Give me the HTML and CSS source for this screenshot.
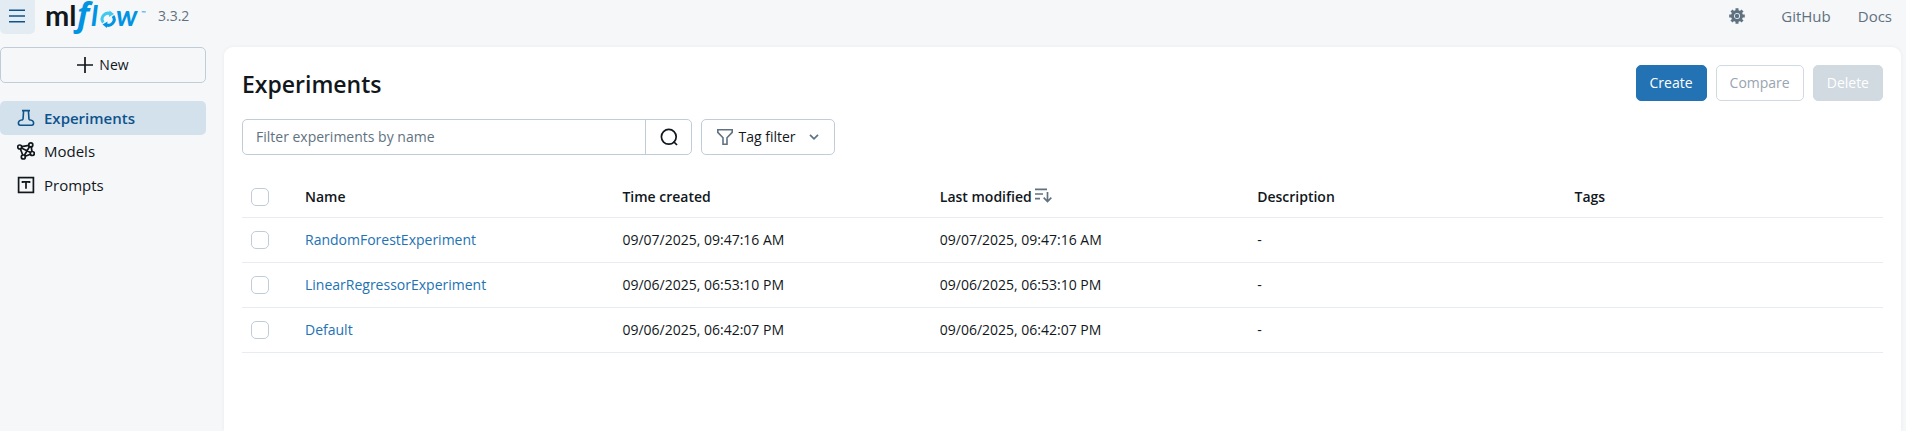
FILE: index.html
```html
<!DOCTYPE html>
<html lang="en">
<head>
<meta charset="utf-8">
<title>Experiments</title>
<link rel="stylesheet" href="styles.css">
</head>
<body>
<header class="topbar">
  <button class="menu-button" type="button" aria-label="Toggle sidebar">
    <svg width="16" height="16" viewBox="0 0 16 16" fill="none" stroke="currentColor" stroke-width="1.5"><path d="M0 2.2h16M0 8h16M0 13.8h16"/></svg>
  </button>
  <a class="logo" href="#" aria-label="mlflow home">
    <svg width="100" height="36" viewBox="0 0 100 36">
      <text class="logo-ml" x="-2" y="26">ml</text>
      <text class="logo-f" x="30" y="26">f</text>
      <text class="logo-flow" x="44" y="26">l</text>
      <g fill="none" stroke-width="3">
        <path stroke="#43c9ed" d="M56.300 22.500a5.800 5.800 0 0 1 7.500-8.500"/>
        <path stroke="#0194e2" d="M66 16a5.800 5.800 0 0 1-7.500 8.500"/>
      </g>
      <path fill="#43c9ed" d="M62.500 10.500l4.500 3.500-5 3z"/>
      <path fill="#0194e2" d="M60 28l-4.500-3.500 5-3z"/>
      <text class="logo-flow" x="69" y="26">w</text>
      <text class="logo-tm" x="94" y="15">™</text>
    </svg>
  </a>
  <span class="version">3.3.2</span>
  <nav class="top-links">
    <a class="gear" href="#" aria-label="Settings">
      <svg width="16" height="16" viewBox="0 0 16 16" fill="none" stroke="currentColor"><circle cx="8" cy="8" r="4.500" stroke-width="3"/><path stroke-width="3" d="M8 .2v3M8 12.800v3M.2 8h3M12.800 8h3M2.500 2.500l2 2M11.500 11.500l2 2M13.500 2.500l-2 2M4.500 11.500l-2 2"/><circle cx="8" cy="8" r="2.200" fill="currentColor" stroke="none"/></svg>
    </a>
    <a href="#">GitHub</a>
    <a href="#">Docs</a>
  </nav>
</header>
<div class="layout">
  <aside class="sidebar">
    <button class="button new-button" type="button">
      <svg width="16" height="16" viewBox="0 0 16 16" fill="none" stroke="currentColor" stroke-width="1.700"><path d="M8 0v16M0 8h16"/></svg>New
    </button>
    <nav class="side-nav">
      <a class="side-link active" href="#">
        <svg width="18" height="18" viewBox="0 0 18 18" fill="none" stroke="currentColor" stroke-width="1.600"><path d="M5 1.600h8M6.600 1.600l-.6 9.200M11.400 1.600l.6 9.200M6 10.800c-2.800.3-4.600 1.300-4.600 3.200 0 1.500.6 2.200 1.800 2.200h11.600c1.200 0 1.800-.7 1.800-2.200 0-1.900-1.800-2.900-4.600-3.200"/></svg>Experiments
      </a>
      <a class="side-link" href="#">
        <svg width="18" height="18" viewBox="0 0 18 18" fill="none" stroke="currentColor" stroke-width="1.700"><circle cx="2.700" cy="5" r="2"/><circle cx="13.800" cy="2.900" r="2"/><circle cx="15.300" cy="11.500" r="2"/><circle cx="6.300" cy="15" r="2"/><path d="M4.700 4.600l7.200-1.300M4.400 6.100l9.200 4.500M3.400 7l2.300 6M14.200 4.900l.8 4.600M12.600 4.500l-5.200 8.800M8.200 14.200l5.300-2"/></svg>Models
      </a>
      <a class="side-link" href="#">
        <svg width="18" height="18" viewBox="0 0 18 18" fill="none" stroke="currentColor" stroke-width="1.700"><rect x="1.600" y="1.600" width="14.800" height="14.800"/><path d="M5.500 7V5.800h7V7M9 5.800v7"/></svg>Prompts
      </a>
    </nav>
  </aside>
  <main class="panel">
    <div class="title-row">
      <h1>Experiments</h1>
      <div class="actions">
        <button class="button primary" type="button">Create</button>
        <button class="button" type="button" disabled>Compare</button>
        <button class="button solid" type="button" disabled>Delete</button>
      </div>
    </div>
    <form class="filters">
      <div class="search">
        <input type="text" placeholder="Filter experiments by name" aria-label="Filter experiments by name">
        <button type="button" aria-label="Search">
          <svg width="18" height="18" viewBox="0 0 18 18" fill="none" stroke="currentColor" stroke-width="1.700"><circle cx="8.800" cy="8.800" r="7.400"/><path d="M13.500 13.500l3.500 3.500"/></svg>
        </button>
      </div>
      <button class="button tag-filter" type="button">
        <svg width="16" height="16" viewBox="0 0 16 16" fill="none" stroke="#5f7281" stroke-width="1.600"><path d="M.8.8h14.400v2.600L10 8.800v6.400H6V8.800L.8 3.400z"/></svg>
        <span>Tag filter</span>
        <svg class="chevron" width="10" height="6" viewBox="0 0 10 6" fill="none" stroke="#5f7281" stroke-width="1.700"><path d="M1 .8l4 4 4-4"/></svg>
      </button>
    </form>
    <table class="table">
      <thead>
        <tr>
          <th class="check"><input type="checkbox" aria-label="Select all"></th>
          <th>Name</th>
          <th>Time created</th>
          <th>Last modified <svg class="sort" width="17" height="15" viewBox="0 0 17 15" fill="none" stroke="#5f7281" stroke-width="1.700"><path d="M0 1.300h12M0 6h8M0 10.700h5M12.500 4v9.500M8.700 9.700l3.800 3.800 3.800-3.800"/></svg></th>
          <th>Description</th>
          <th>Tags</th>
        </tr>
      </thead>
      <tbody>
        <tr>
          <td class="check"><input type="checkbox" aria-label="Select RandomForestExperiment"></td>
          <td><a href="#">RandomForestExperiment</a></td>
          <td>09/07/2025, 09:47:16 AM</td>
          <td>09/07/2025, 09:47:16 AM</td>
          <td>-</td>
          <td></td>
        </tr>
        <tr>
          <td class="check"><input type="checkbox" aria-label="Select LinearRegressorExperiment"></td>
          <td><a href="#">LinearRegressorExperiment</a></td>
          <td>09/06/2025, 06:53:10 PM</td>
          <td>09/06/2025, 06:53:10 PM</td>
          <td>-</td>
          <td></td>
        </tr>
        <tr>
          <td class="check"><input type="checkbox" aria-label="Select Default"></td>
          <td><a href="#">Default</a></td>
          <td>09/06/2025, 06:42:07 PM</td>
          <td>09/06/2025, 06:42:07 PM</td>
          <td>-</td>
          <td></td>
        </tr>
      </tbody>
    </table>
  </main>
</div>
</body>
</html>
```
FILE: styles.css
```css
* { box-sizing: border-box; }
body {
  margin: 0;
  min-height: 100vh;
  display: flex;
  flex-direction: column;
  background: #f6f7f9;
  color: #11171c;
  font: 14px/20px "Segoe UI", "Open Sans", sans-serif;
}
button, input { font: inherit; color: inherit; }
a { color: #2272b4; text-decoration: none; }
svg { flex: none; }

.topbar { display: flex; align-items: flex-start; height: 47px; }
.menu-button {
  display: flex;
  align-items: center;
  justify-content: center;
  width: 35px;
  height: 34px;
  padding: 0 1px 2px 0;
  border: 0;
  border-radius: 0 0 5px 5px;
  background: #e4ecf3;
  color: #0e538b;
}
.logo { margin-left: 12px; height: 36px; }
.logo svg { display: block; overflow: visible; }
.logo-ml { font: 700 29px Lato, sans-serif; fill: #11171c; }
.logo-f { font: italic 700 33px "Open Sans", sans-serif; fill: #0194e2; }
.logo-flow { font: italic 700 29px Lato, sans-serif; fill: #0194e2; }
.logo-tm { font: 6px Lato, sans-serif; fill: #0194e2; }
.version { margin-left: 11px; padding-top: 6px; color: #5f7281; }
.top-links { display: flex; margin-left: auto; padding: 6px 14px 0 0; gap: 27px; }
.top-links a { color: #5f7281; font-size: 15px; }
.gear { display: flex; align-items: center; margin-right: 9px; }

.layout { display: flex; flex: 1; gap: 18px; padding-right: 5px; }
.sidebar { width: 206px; flex: none; }
.button {
  display: inline-flex;
  align-items: center;
  justify-content: center;
  height: 36px;
  padding: 0 13px;
  border: 1px solid #c0cdd8;
  border-radius: 5px;
  background: transparent;
}
.new-button { width: 100%; gap: 6px; }
.side-nav { display: flex; flex-direction: column; margin-top: 18px; }
.side-link {
  display: flex;
  align-items: center;
  gap: 9px;
  height: 34px;
  padding: 0 0 2px 17px;
  border-radius: 5px;
  color: #11171c;
  font-size: 15px;
}
.side-link.active { padding-bottom: 0; background: #d3e1ed; color: #0e538b; font-weight: 600; }

.panel {
  flex: 1;
  min-width: 0;
  padding: 18px;
  background: #fff;
  border-radius: 9px 9px 0 0;
  box-shadow: 0 0 4px #0000000d;
}
.title-row { display: flex; align-items: center; justify-content: space-between; }
h1 { margin: 0; padding-top: 2px; font-size: 23px; line-height: 34px; font-weight: 600; }
.actions { display: flex; gap: 9px; }
.button:disabled { color: #97a5b1; border-color: #d1d9e1; }
.button.primary { background: #2272b4; border-color: #2272b4; color: #fff; }
.button.solid:disabled { background: #d1d9e1; color: #fff; }

.filters { display: flex; gap: 9px; margin-top: 18px; }
.search { display: flex; width: 450px; height: 36px; border: 1px solid #c0cdd8; border-radius: 5px; }
.search input { flex: 1; min-width: 0; padding: 0 13px; border: 0; background: transparent; outline: 0; }
.search input::placeholder { color: #5f7281; opacity: 1; }
.search button {
  display: flex;
  align-items: center;
  justify-content: center;
  width: 46px;
  padding: 0;
  border: 0;
  border-left: 1px solid #c0cdd8;
  background: transparent;
}
.tag-filter { width: 134px; gap: 5px; }
.chevron { margin-left: 8px; }

.table { width: 100%; margin-top: 23px; border-collapse: collapse; table-layout: fixed; }
.table th, .table td { height: 45px; padding: 0 9px; border-bottom: 1px solid #e8ecf0; text-align: left; }
.table th { height: 39px; font-weight: 600; }
.table .check { width: 54px; }
.sort { vertical-align: -1px; }
.check input {
  display: block;
  appearance: none;
  width: 18px;
  height: 18px;
  margin: 0;
  border: 1px solid #c0cdd8;
  border-radius: 5px;
  background: #fff;
}
```
